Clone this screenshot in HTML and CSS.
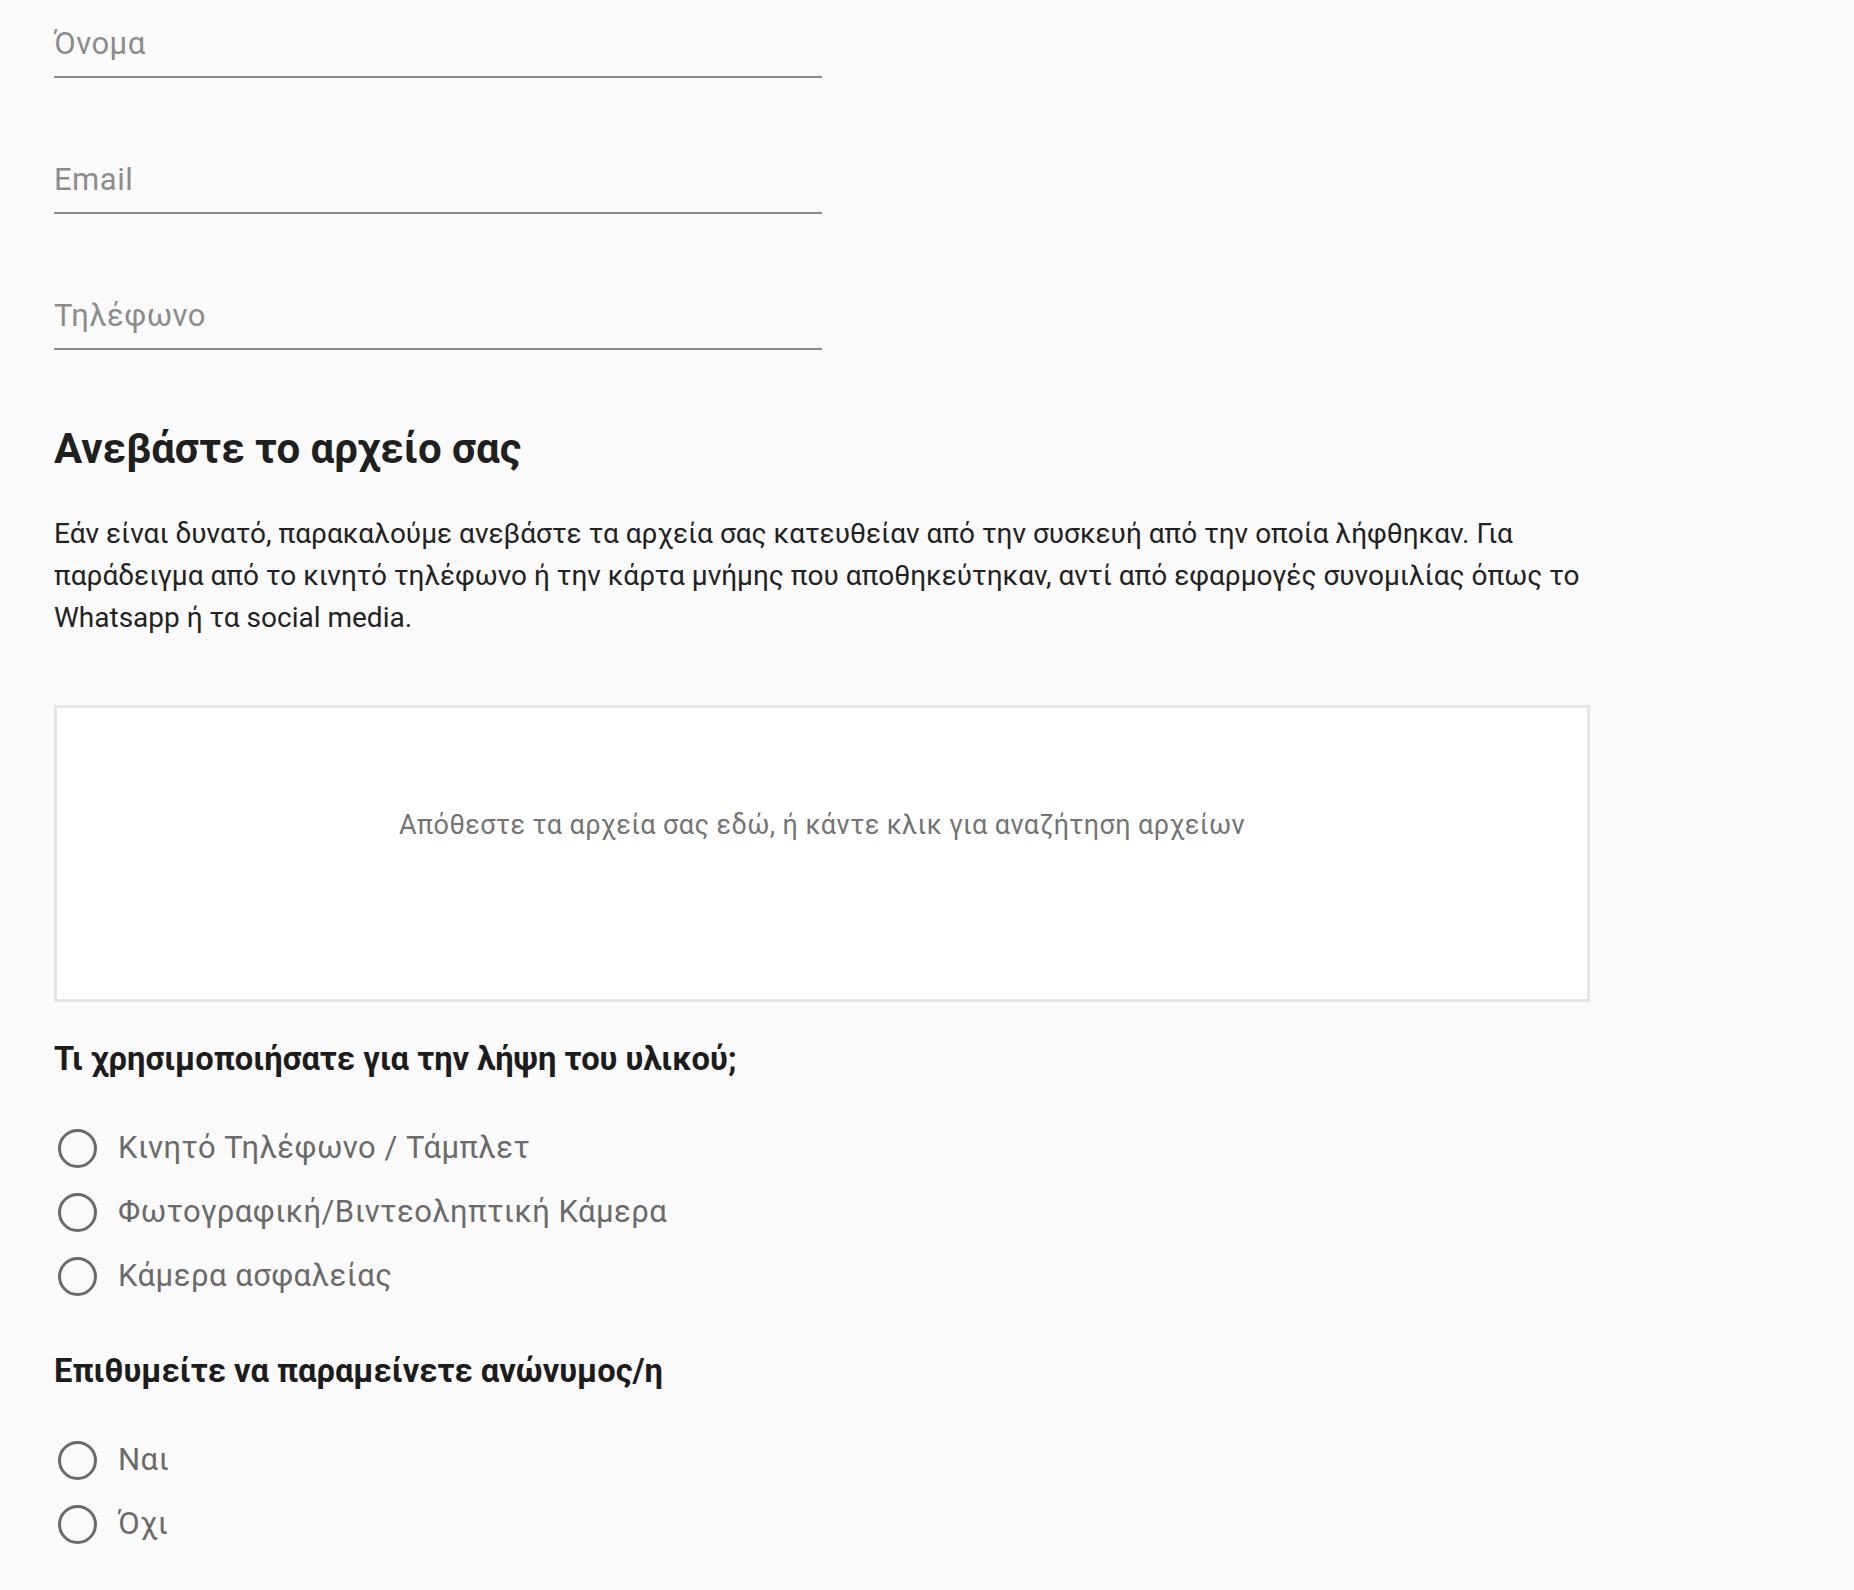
FILE: index.html
```
<!DOCTYPE html>
<html lang="el">
<head>
<meta charset="utf-8">
<title>Φόρμα αποστολής αρχείων</title>
<link rel="stylesheet" href="styles.css">
</head>
<body>
<main class="form">
  <div class="fields">
    <div class="field"><span class="placeholder">Όνομα</span></div>
    <div class="field"><span class="placeholder">Email</span></div>
    <div class="field"><span class="placeholder">Τηλέφωνο</span></div>
  </div>

  <h2 class="section-title">Ανεβάστε το αρχείο σας</h2>
  <p class="intro">Εάν είναι δυνατό, παρακαλούμε ανεβάστε τα αρχεία σας κατευθείαν από την συσκευή από την οποία λήφθηκαν. Για παράδειγμα από το κινητό τηλέφωνο ή την κάρτα μνήμης που αποθηκεύτηκαν, αντί από εφαρμογές συνομιλίας όπως το Whatsapp ή τα social media.</p>

  <div class="dropzone">
    <span class="dz-message">Απόθεστε τα αρχεία σας εδώ, ή κάντε κλικ για αναζήτηση αρχείων</span>
  </div>

  <h3 class="question">Τι χρησιμοποιήσατε για την λήψη του υλικού;</h3>
  <div class="options">
    <label class="option"><span class="radio"></span><span class="option-label">Κινητό Τηλέφωνο / Τάμπλετ</span></label>
    <label class="option"><span class="radio"></span><span class="option-label">Φωτογραφική/Βιντεοληπτική Κάμερα</span></label>
    <label class="option"><span class="radio"></span><span class="option-label">Κάμερα ασφαλείας</span></label>
  </div>

  <h3 class="question question-second">Επιθυμείτε να παραμείνετε ανώνυμος/η</h3>
  <div class="options">
    <label class="option"><span class="radio"></span><span class="option-label">Ναι</span></label>
    <label class="option"><span class="radio"></span><span class="option-label">Όχι</span></label>
  </div>
</main>
</body>
</html>
```

FILE: styles.css
```
html, body {
  margin: 0;
  padding: 0;
  background: #fafafa;
}

body {
  font-family: Roboto, "Noto Sans", "Liberation Sans", sans-serif;
  color: #222;
}

.form {
  width: 1536px;
  padding: 24px 0 40px 54px;
}

.fields {
  display: flex;
  flex-direction: column;
  gap: 82px;
}

.field {
  width: 768px;
  height: 40px;
  padding-bottom: 12px;
  border-bottom: 2px solid #8a8a8a;
  display: flex;
  align-items: center;
}

.placeholder {
  font-size: 31px;
  line-height: 40px;
  color: #8c8c8c;
  letter-spacing: 0.5px;
}

.section-title {
  margin: 75px 0 0;
  font-size: 42px;
  line-height: 48px;
  font-weight: 700;
  color: #1f1f1f;
}

.intro {
  margin: 40px 0 0;
  font-size: 28px;
  line-height: 42px;
  color: #222;
}

.dropzone {
  margin-top: 66px;
  box-sizing: border-box;
  height: 297px;
  border: 3px solid #e5e5e5;
  background: #fff;
  padding-top: 99px;
  text-align: center;
}

.dz-message {
  font-size: 27px;
  line-height: 36px;
  color: #747474;
  letter-spacing: 0.4px;
}

.question {
  margin: 39px 0 0;
  font-size: 32.7px;
  line-height: 36px;
  font-weight: 700;
  color: #1c1c1c;
}

.question-second {
  margin-top: 45px;
}

.options {
  margin-top: 39px;
  display: flex;
  flex-direction: column;
}

.option {
  height: 64px;
  display: flex;
  align-items: center;
  gap: 21px;
  padding-left: 4px;
}

.radio {
  box-sizing: border-box;
  width: 39px;
  height: 39px;
  border: 3px solid #6a6a6a;
  border-radius: 50%;
  flex: none;
}

.option-label {
  font-size: 31px;
  line-height: 36px;
  color: #6a6a6a;
  letter-spacing: 0.5px;
}
```
